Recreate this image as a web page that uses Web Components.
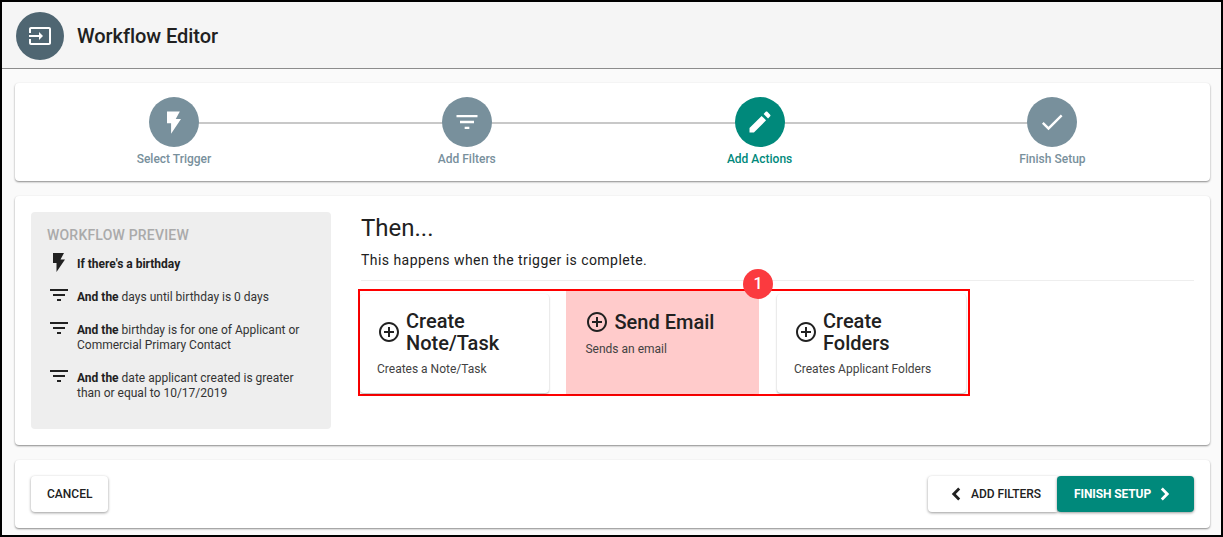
<!DOCTYPE html>
<html>
<head>
<meta charset="utf-8">
<title>Workflow Editor</title>
<style>
    html, body { margin: 0; padding: 0; }
    body { font-family: Roboto, "Liberation Sans", sans-serif; color: #212121; }
</style>
</head>
<body>
<wf-page>
    <wf-header slot="header">Workflow Editor</wf-header>
    <wf-stepper>
        <wf-step icon="flash">Select Trigger</wf-step>
        <wf-step icon="filter">Add Filters</wf-step>
        <wf-step icon="edit" active>Add Actions</wf-step>
        <wf-step icon="check" last>Finish Setup</wf-step>
    </wf-stepper>
    <wf-body>
        <wf-preview slot="preview">
            <wf-preview-row icon="flash"><b>If there's a birthday</b></wf-preview-row>
            <wf-preview-row icon="filter"><b>And the</b> days until birthday is 0 days</wf-preview-row>
            <wf-preview-row icon="filter"><b>And the</b> birthday is for one of Applicant or Commercial Primary Contact</wf-preview-row>
            <wf-preview-row icon="filter"><b>And the</b> date applicant created is greater than or equal to 10/17/2019</wf-preview-row>
        </wf-preview>
        <wf-actions>
            <wf-action-card>Create Note/Task<span slot="detail">Creates a Note/Task</span></wf-action-card>
            <wf-action-card highlight>Send Email<span slot="detail">Sends an email</span></wf-action-card>
            <wf-action-card>Create Folders<span slot="detail">Creates Applicant Folders</span></wf-action-card>
        </wf-actions>
    </wf-body>
    <wf-footer>
        <wf-button slot="left">CANCEL</wf-button>
        <wf-button slot="right" before="chevron-left">ADD FILTERS</wf-button>
        <wf-button slot="right" after="chevron-right" primary>FINISH SETUP</wf-button>
    </wf-footer>
</wf-page>

<script>
const ICONS = {
    input: 'M21 3.01H3c-1.1 0-2 .9-2 2V9h2V4.99h18v14.03H3V15H1v4.01c0 1.1.9 1.98 2 1.98h18c1.1 0 2-.88 2-1.98v-14c0-1.11-.9-2-2-2zM11 16l4-4-4-4v3H1v2h10v3z',
    flash: 'M6 3h11l-3.5 6.5H18L9.5 22v-9H6z',
    filter: 'M10 18h4v-2h-4v2zM3 6v2h18V6H3zm3 7h12v-2H6v2z',
    edit: 'M3 17.2V21h3.8L17.2 10.6l-3.8-3.8L3 17.2zM20.7 7.1c.4-.4.4-1 0-1.4l-2.4-2.4c-.4-.4-1-.4-1.4 0l-1.8 1.8 3.8 3.8 1.8-1.8z',
    check: 'M9 16.17L4.83 12l-1.42 1.41L9 19 21 7l-1.41-1.41z',
    plus: 'M13 7h-2v4H7v2h4v4h2v-4h4v-2h-4V7zm-1-5C6.48 2 2 6.48 2 12s4.48 10 10 10 10-4.48 10-10S17.52 2 12 2zm0 18c-4.41 0-8-3.59-8-8s3.59-8 8-8 8 3.59 8 8-3.59 8-8 8z',
    'chevron-left': 'M14.2 5.6l2 2L11.8 12l4.4 4.4-2 2L7.8 12z',
    'chevron-right': 'M9.8 5.6L7.8 7.6 12.2 12l-4.4 4.4 2 2L16.2 12z'
};

function icon(name, size) {
    return `<svg width="${size}" height="${size}" viewBox="0 0 24 24" fill="currentColor" style="display:block;flex:none"><path d="${ICONS[name]}"/></svg>`;
}

const CARD_SHADOW = '0 1px 2px rgba(0,0,0,.45)';

class Base extends HTMLElement {
    constructor() {
        super();
        this.attachShadow({mode: 'open'});
    }

    connectedCallback() {
        this.shadowRoot.innerHTML = `<style>${this.styles}</style>${this.template}`;
    }
}

class WfPage extends Base {
    get styles() {
        return `
        :host {
            display: flex;
            flex-direction: column;
            box-sizing: border-box;
            width: 1223px;
            height: 537px;
            border: 2px solid #000;
            background: #fafafa;
            overflow: hidden;
        }
        main {
            flex: 1;
            display: flex;
            flex-direction: column;
            gap: 15px;
            padding: 14px 11px 7px 13px;
        }`;
    }
    get template() {
        return `<slot name="header"></slot><main><slot></slot></main>`;
    }
}

class WfHeader extends Base {
    get styles() {
        return `
        :host {
            display: flex;
            align-items: center;
            gap: 13px;
            box-sizing: border-box;
            height: 67px;
            padding: 2px 0 0 14px;
            background: #f5f5f5;
            border-bottom: 1px solid #8c8c8c;
        }
        .badge {
            width: 48px;
            height: 48px;
            border-radius: 50%;
            background: #4f6672;
            color: #fff;
            display: flex;
            align-items: center;
            justify-content: center;
        }
        h1 { margin: 0; font: 500 20px/24px Roboto, sans-serif; letter-spacing: -.05px; color: #212121; }`;
    }
    get template() {
        return `<div class="badge">${icon('input', 24)}</div><h1><slot></slot></h1>`;
    }
}

class WfStepper extends Base {
    get styles() {
        return `
        :host {
            display: grid;
            grid-template-columns: repeat(4, 292.8px);
            box-sizing: border-box;
            height: 98px;
            padding: 14px 0 0 12.6px;
            background: #fff;
            border-radius: 4px;
            box-shadow: ${CARD_SHADOW};
        }`;
    }
    get template() {
        return `<slot></slot>`;
    }
}

class WfStep extends Base {
    get styles() {
        return `
        :host {
            display: flex;
            flex-direction: column;
            align-items: center;
            position: relative;
            color: #78909c;
        }
        :host([active]) { color: #00897b; }
        :host(:not([last]))::after {
            content: "";
            position: absolute;
            left: 50%;
            width: 100%;
            top: 25px;
            height: 2px;
            background: #c8c8c8;
        }
        .dot {
            position: relative;
            z-index: 1;
            width: 50px;
            height: 50px;
            border-radius: 50%;
            display: flex;
            align-items: center;
            justify-content: center;
            background: #78909c;
            color: #fff;
        }
        :host([active]) .dot { background: #00897b; }
        span { margin-top: 4px; font: 500 12px/16px Roboto, sans-serif; }`;
    }
    get template() {
        return `<div class="dot">${icon(this.getAttribute('icon'), 28)}</div><span><slot></slot></span>`;
    }
}

class WfBody extends Base {
    get styles() {
        return `
        :host {
            display: grid;
            grid-template-columns: 300px 1fr;
            column-gap: 30px;
            box-sizing: border-box;
            height: 249px;
            padding: 16px;
            background: #fff;
            border-radius: 4px;
            box-shadow: ${CARD_SHADOW};
        }`;
    }
    get template() {
        return `<slot name="preview"></slot><slot></slot>`;
    }
}

class WfPreview extends Base {
    get styles() {
        return `
        :host {
            display: block;
            padding: 16px;
            background: #eee;
            border-radius: 4px;
        }
        h4 {
            margin: 0 0 8px;
            font: 500 14px/14px Roboto, sans-serif;
            letter-spacing: .2px;
            color: #aaa;
        }
        .rows { display: flex; flex-direction: column; gap: 9px; }`;
    }
    get template() {
        return `<h4>WORKFLOW PREVIEW</h4><div class="rows"><slot></slot></div>`;
    }
}

class WfPreviewRow extends Base {
    get styles() {
        return `
        :host {
            display: flex;
            gap: 6px;
            color: #212121;
        }
        div {
            padding: 7px 0 2px;
            font: 400 12px/15px Roboto, sans-serif;
            color: #333;
        }
        ::slotted(b) { font-weight: 700; color: #212121; }`;
    }
    get template() {
        return `${icon(this.getAttribute('icon'), 24)}<div><slot></slot></div>`;
    }
}

class WfActions extends Base {
    get styles() {
        return `
        :host { display: block; }
        h2 { margin: 0; font: 400 24px/32px Roboto, sans-serif; color: #212121; }
        p { margin: 6px 0 0; font: 400 14px/20px Roboto, sans-serif; letter-spacing: .45px; color: #212121; }
        hr { margin: 10px 0 8px; border: 0; border-top: 1px solid #eee; }
        .marked {
            position: relative;
            display: flex;
            gap: 19.7px;
            box-sizing: border-box;
            width: 612px;
            height: 107px;
            margin-left: -3px;
            padding: 3px 1px 1px 0;
            border: 2px solid #f00;
        }
        .count {
            position: absolute;
            left: 383px;
            top: -22px;
            width: 30px;
            height: 30px;
            border-radius: 50%;
            background: #fb3a3f;
            color: #fff;
            font: 500 16px/30px Roboto, sans-serif;
            text-align: center;
        }`;
    }
    get template() {
        return `
        <h2>Then...</h2>
        <p>This happens when the trigger is complete.</p>
        <hr>
        <div class="marked"><slot></slot><div class="count">1</div></div>`;
    }
}

class WfActionCard extends Base {
    get styles() {
        return `
        :host {
            display: block;
            position: relative;
            z-index: 0;
            box-sizing: border-box;
            width: 188.8px;
            padding: 16px 17px 0;
            background: #fff;
            border-radius: 4px;
            box-shadow: 0 1px 2px rgba(0,0,0,.3);
        }
        :host([highlight]) { background: transparent; }
        :host([highlight])::before {
            content: "";
            position: absolute;
            z-index: -1;
            left: -2.4px;
            top: -3px;
            right: -1.5px;
            bottom: -1px;
            background: #ffcbcb;
        }
        .title {
            display: flex;
            align-items: center;
            gap: 5px;
            color: #212121;
        }
        .name { font: 500 20px/22px Roboto, sans-serif; }
        .detail { margin-top: 7px; font: 400 12px/16px Roboto, sans-serif; color: #424242; }`;
    }
    get template() {
        return `
        <div class="title">${icon('plus', 24)}<div class="name"><slot></slot></div></div>
        <div class="detail"><slot name="detail"></slot></div>`;
    }
}

class WfFooter extends Base {
    get styles() {
        return `
        :host {
            display: flex;
            justify-content: space-between;
            align-items: center;
            box-sizing: border-box;
            height: 68px;
            padding: 0 16px;
            background: #fff;
            border-radius: 4px;
            box-shadow: ${CARD_SHADOW};
        }
        div { display: flex; }`;
    }
    get template() {
        return `<div><slot name="left"></slot></div><div><slot name="right"></slot></div>`;
    }
}

class WfButton extends Base {
    get styles() {
        return `
        :host {
            display: flex;
            align-items: center;
            box-sizing: border-box;
            height: 36px;
            padding: 0 16px;
            background: #fff;
            color: #212121;
            border-radius: 4px;
            font: 500 12px/16px Roboto, sans-serif;
            box-shadow: 0 1px 3px rgba(0,0,0,.4);
        }
        :host([before]) { width: 129px; padding: 0 0 0 16px; gap: 3px; letter-spacing: -.05px; border-radius: 4px 0 0 4px; }
        :host([after]) { width: 137px; padding: 0 0 0 17px; gap: 2px; letter-spacing: -.1px; }
        :host([primary]) { position: relative; background: #00897b; color: #fff; font-weight: 700; }`;
    }
    get template() {
        const before = this.getAttribute('before');
        const after = this.getAttribute('after');
        return `${before ? icon(before, 24) : ''}<slot></slot>${after ? icon(after, 24) : ''}`;
    }
}

customElements.define('wf-page', WfPage);
customElements.define('wf-header', WfHeader);
customElements.define('wf-stepper', WfStepper);
customElements.define('wf-step', WfStep);
customElements.define('wf-body', WfBody);
customElements.define('wf-preview', WfPreview);
customElements.define('wf-preview-row', WfPreviewRow);
customElements.define('wf-actions', WfActions);
customElements.define('wf-action-card', WfActionCard);
customElements.define('wf-footer', WfFooter);
customElements.define('wf-button', WfButton);
</script>
</body>
</html>
